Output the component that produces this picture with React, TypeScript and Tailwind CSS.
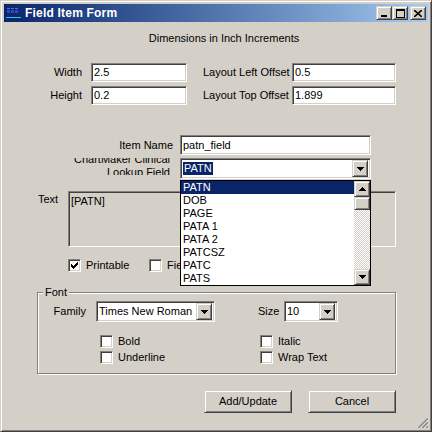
import React from "react";

const sunken =
  "border border-t-[#808080] border-l-[#808080] border-b-white border-r-white shadow-[inset_1px_1px_0_#404040,inset_-1px_-1px_0_#d4d0c8]";
const raised =
  "bg-[#d4d0c8] border border-t-[#d4d0c8] border-l-[#d4d0c8] border-b-[#404040] border-r-[#404040] shadow-[inset_1px_1px_0_#fff,inset_-1px_-1px_0_#808080]";

function ArrowDown() {
  return (
    <svg width="7" height="4" viewBox="0 0 7 4">
      <path d="M0 0H7V1H6V2H5V3H4V4H3V3H2V2H1V1H0Z" fill="#000" />
    </svg>
  );
}

function ArrowUp() {
  return (
    <svg width="7" height="4" viewBox="0 0 7 4">
      <path d="M3 0H4V1H5V2H6V3H7V4H0V3H1V2H2V1H3Z" fill="#000" />
    </svg>
  );
}

function CheckMark() {
  // classic 7x7 windows tick
  const rows: [number, number, number][] = [
    [0, 6, 1],
    [1, 5, 2],
    [2, 0, 1],
    [2, 4, 3],
    [3, 0, 2],
    [3, 3, 3],
    [4, 0, 5],
    [5, 1, 3],
    [6, 2, 1],
  ];
  return (
    <svg width="7" height="7" viewBox="0 0 7 7">
      {rows.map(([y, x, w], i) => (
        <rect key={i} x={x} y={y} width={w} height={1} fill="#000" />
      ))}
    </svg>
  );
}

function Check({ checked, label, className }: { checked?: boolean; label: string; className?: string }) {
  return (
    <div className={`flex items-center h-[13px] ${className ?? ""}`}>
      <div className={`${sunken} bg-white w-[13px] h-[13px] shrink-0 flex items-center justify-center`}>
        {checked && <CheckMark />}
      </div>
      <span className="ml-[5px] whitespace-nowrap">{label}</span>
    </div>
  );
}

function DropBtn() {
  return (
    <div className={`${raised} w-[16px] h-[17px] shrink-0 flex items-center justify-center`}>
      <ArrowDown />
    </div>
  );
}

function TitleBtn({ children }: { children: React.ReactNode }) {
  return <div className={`${raised} w-[16px] h-[14px] flex items-center justify-center`}>{children}</div>;
}

const lookupItems = ["PATN", "DOB", "PAGE", "PATA 1", "PATA 2", "PATCSZ", "PATC", "PATS"];

export default function App() {
  return (
    <div className="w-[432px] h-[432px] relative bg-[#d4d0c8] border border-t-[#d4d0c8] border-l-[#d4d0c8] border-b-[#404040] border-r-[#404040] shadow-[inset_1px_1px_0_#fff,inset_-1px_-1px_0_#808080] p-[3px] font-['Liberation_Sans',Arial,sans-serif] text-[11px] leading-[13px] text-black">
      {/* Title bar */}
      <div className="h-[18px] flex items-center bg-linear-to-r from-[#0a246a] to-[#a6caf0] pl-[2px] pr-[2px]">
        <svg width="16" height="16" viewBox="0 0 16 16">
          <rect x="1" y="3" width="3" height="1" fill="#5a6fd0" />
          <rect x="5" y="3" width="3" height="1" fill="#5a6fd0" />
          <rect x="9" y="3" width="3" height="1" fill="#5a6fd0" />
          <rect x="1" y="5" width="3" height="3" fill="#3048c8" />
          <rect x="5" y="5" width="3" height="3" fill="#3048c8" />
          <rect x="9" y="5" width="3" height="3" fill="#3048c8" />
          <rect x="0" y="12" width="15" height="1" fill="#25c8f0" />
        </svg>
        <span className="ml-[3px] text-white font-bold text-[12px] tracking-[0.2px]">Field Item Form</span>
        <div className="ml-auto flex items-center">
          <TitleBtn>
            <svg width="8" height="8" viewBox="0 0 8 8">
              <rect x="1" y="6" width="6" height="2" fill="#000" />
            </svg>
          </TitleBtn>
          <TitleBtn>
            <svg width="9" height="9" viewBox="0 0 9 9">
              <rect x="0" y="0" width="9" height="2" fill="#000" />
              <rect x="0" y="0" width="1" height="9" fill="#000" />
              <rect x="8" y="0" width="1" height="9" fill="#000" />
              <rect x="0" y="8" width="9" height="1" fill="#000" />
            </svg>
          </TitleBtn>
          <div className="ml-[2px]">
            <TitleBtn>
              <svg width="8" height="7" viewBox="0 0 8 7">
                <path d="M0 0L8 7M8 0L0 7" stroke="#000" strokeWidth="1.6" />
              </svg>
            </TitleBtn>
          </div>
        </div>
      </div>

      {/* Body */}
      <div className="flex flex-col">
        <div className="mt-[10px] flex justify-center pl-[16px]">Dimensions in Inch Increments</div>

        <div className="mt-[18px] h-[19px] flex items-center">
          <div className="w-[78px] text-right">Width</div>
          <div className={`${sunken} bg-white ml-[9px] w-[96px] h-[19px] pl-[2px] flex items-center`}>2.5</div>
          <div className="ml-[16px] w-[84px] text-right whitespace-nowrap">Layout Left Offset</div>
          <div className={`${sunken} bg-white ml-[5px] w-[104px] h-[19px] pl-[2px] flex items-center`}>0.5</div>
        </div>
        <div className="mt-[4px] h-[19px] flex items-center">
          <div className="w-[78px] text-right">Height</div>
          <div className={`${sunken} bg-white ml-[9px] w-[96px] h-[19px] pl-[2px] flex items-center`}>0.2</div>
          <div className="ml-[16px] w-[84px] text-right whitespace-nowrap">Layout Top Offset</div>
          <div className={`${sunken} bg-white ml-[5px] w-[104px] h-[19px] pl-[2px] flex items-center`}>1.899</div>
        </div>

        <div className="mt-[30px] h-[20px] flex items-center">
          <div className="w-[169px] text-right">Item Name</div>
          <div className={`${sunken} bg-white ml-[7px] w-[191px] h-[20px] pl-[2px] flex items-center`}>patn_field</div>
        </div>

        <div className="mt-[3px] h-[21px] flex items-start">
          <div className="w-[166px] h-[17px] overflow-hidden text-right">
            <div className="-mt-[5px]">
              ChartMaker Clinical
              <br />
              Lookup Field
            </div>
          </div>
          <div className="ml-[10px] w-[191px] relative">
            <div className={`${sunken} bg-white h-[21px] flex items-center pr-[2px]`}>
              <div className="flex-1 pl-[2px]">
                <span className="bg-[#0a246a] text-white px-[1px] inline-block leading-[13px]">PATN</span>
              </div>
              <DropBtn />
            </div>
            {/* open dropdown list */}
            <div className="absolute left-0 top-[22px] w-[191px] h-[106px] z-10 bg-white border border-black flex">
              <div className="flex-1 flex flex-col">
                {lookupItems.map((it, i) => (
                  <div
                    key={it}
                    className={`h-[13px] pl-[2px] leading-[13px] ${i === 0 ? "bg-[#0a246a] text-white" : ""}`}
                  >
                    {it}
                  </div>
                ))}
              </div>
              <div className="w-[16px] flex flex-col bg-[repeating-conic-gradient(#fff_0%_25%,#d4d0c8_0%_50%)] bg-size-[2px_2px]">
                <div className={`${raised} h-[16px] flex items-center justify-center`}>
                  <ArrowUp />
                </div>
                <div className={`${raised} h-[13px]`} />
                <div className="flex-1" />
                <div className={`${raised} h-[16px] flex items-center justify-center`}>
                  <ArrowDown />
                </div>
              </div>
            </div>
          </div>
        </div>

        <div className="mt-[12px] flex items-start">
          <div className="ml-[34px] w-[30px] mt-[2px]">Text</div>
          <div className={`${sunken} bg-[#d4d0c8] w-[328px] h-[56px] pl-[2px] pt-[3px]`}>[PATN]</div>
        </div>

        <div className="mt-[12px] flex items-center">
          <Check checked label="Printable" className="ml-[64px] w-[81px]" />
          <Check label="Field Is Required" />
        </div>

        <fieldset className="mt-[14px] ml-[33px] w-[359px] h-[88px] border border-[#808080] shadow-[inset_1px_1px_0_#fff,1px_1px_0_#fff] px-0">
          <legend className="ml-[5px] px-[2px] bg-[#d4d0c8]">Font</legend>
          <div className="mt-[2px] h-[21px] flex items-center">
            <div className="w-[48px] text-right">Family</div>
            <div className={`${sunken} bg-white ml-[10px] w-[119px] h-[21px] flex items-center pr-[2px]`}>
              <div className="flex-1 pl-[2px] whitespace-nowrap overflow-hidden">Times New Roman</div>
              <DropBtn />
            </div>
            <div className="ml-[43px] w-[20px]">Size</div>
            <div className={`${sunken} bg-white ml-[6px] w-[54px] h-[21px] flex items-center pr-[2px]`}>
              <div className="flex-1 pl-[2px]">10</div>
              <DropBtn />
            </div>
          </div>
          <div className="mt-[13px] flex items-center">
            <Check label="Bold" className="ml-[62px] w-[160px]" />
            <Check label="Italic" />
          </div>
          <div className="mt-[3px] flex items-center">
            <Check label="Underline" className="ml-[62px] w-[160px]" />
            <Check label="Wrap Text" />
          </div>
        </fieldset>

        <div className="mt-[16px] ml-[200px] flex gap-[16px]">
          <button className={`${raised} w-[88px] h-[23px] flex items-center justify-center`}>Add/Update</button>
          <button className={`${raised} w-[88px] h-[23px] flex items-center justify-center`}>Cancel</button>
        </div>
      </div>

      {/* size grip */}
      <svg className="absolute right-[3px] bottom-[3px]" width="12" height="12" viewBox="0 0 12 12">
        {[0, 4, 8].map((o) => (
          <g key={o}>
            <path d={`M${o + 1} 12L12 ${o + 1}`} stroke="#fff" strokeWidth="1" />
            <path d={`M${o + 2} 12L12 ${o + 2}`} stroke="#808080" strokeWidth="1.4" />
          </g>
        ))}
      </svg>
    </div>
  );
}
